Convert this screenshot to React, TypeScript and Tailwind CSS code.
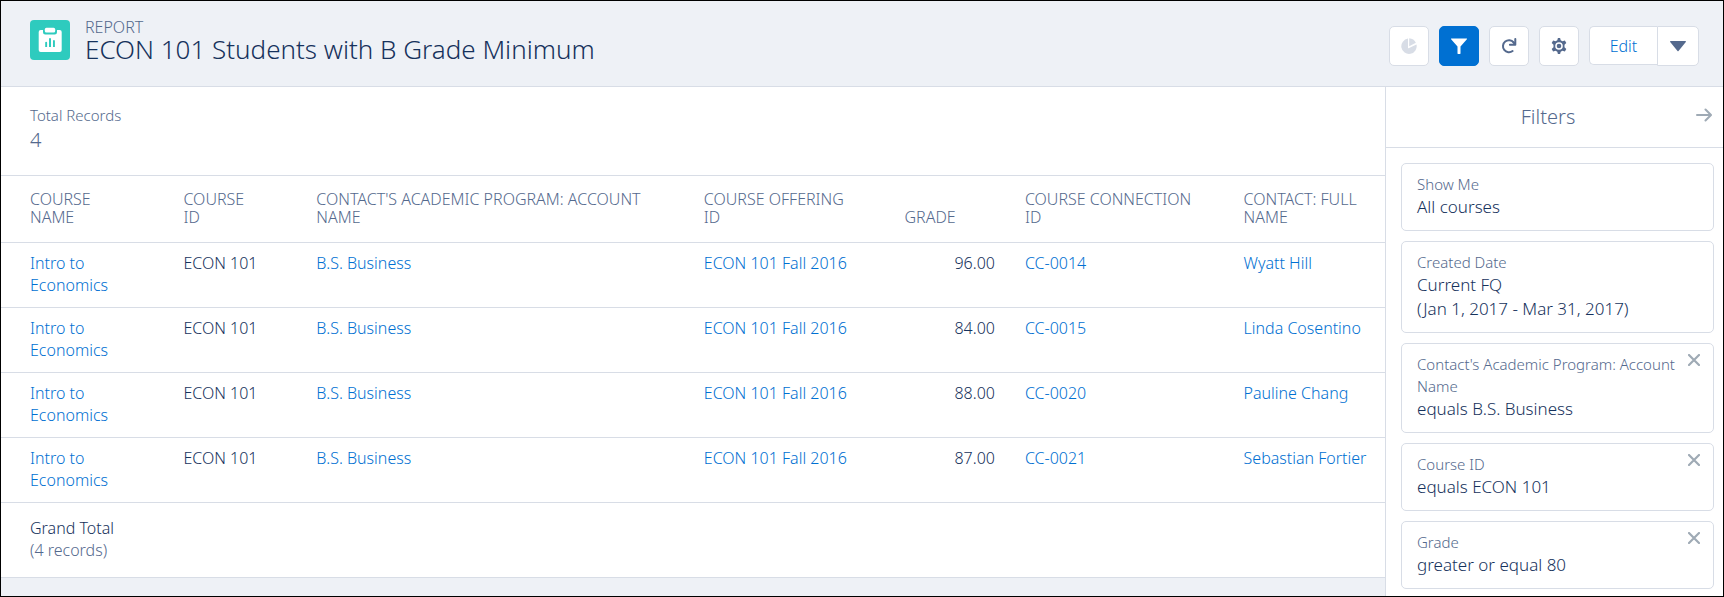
import React from "react";

type Filter = { label: string; values: string[]; removable?: boolean };

const COLUMNS = [
  { title: "Course\nName", width: "w-[12.1%]" },
  { title: "Course\nID", width: "w-[9.6%]" },
  { title: "Contact's Academic Program: Account\nName", width: "w-[28%]" },
  { title: "Course Offering\nID", width: "w-[14.5%]" },
  { title: "Grade", width: "w-[8.7%]" },
  { title: "Course Connection\nID", width: "w-[15.8%]" },
  { title: "Contact: Full\nName", width: "w-[11.3%]" },
];

const ROWS = [
  { grade: "96.00", connection: "CC-0014", contact: "Wyatt Hill" },
  { grade: "84.00", connection: "CC-0015", contact: "Linda Cosentino" },
  { grade: "88.00", connection: "CC-0020", contact: "Pauline Chang" },
  { grade: "87.00", connection: "CC-0021", contact: "Sebastian Fortier" },
];

const FILTERS: Filter[] = [
  { label: "Show Me", values: ["All courses"] },
  { label: "Created Date", values: ["Current FQ", "(Jan 1, 2017 - Mar 31, 2017)"] },
  { label: "Contact's Academic Program: Account Name", values: ["equals B.S. Business"], removable: true },
  { label: "Course ID", values: ["equals ECON 101"], removable: true },
  { label: "Grade", values: ["greater or equal 80"], removable: true },
];

const iconButton = "flex size-10 items-center justify-center rounded-[5px] border";

function ReportIcon() {
  return (
    <svg className="size-10 shrink-0" viewBox="0 0 40 40">
      <rect width="40" height="40" rx="4" fill="#2ecbbe" />
      <rect x="8.7" y="10" width="23" height="22" rx="2" fill="#fff" />
      <path d="M13 8h14v4.3a2.2 2.2 0 0 1-2.2 2.2h-9.6a2.2 2.2 0 0 1-2.2-2.2z" fill="#2ecbbe" />
      <rect x="14.8" y="7.8" width="10.4" height="4.8" rx="1.6" fill="#fff" />
      <path d="M15.2 22.6a.9.9 0 0 1 1.9 0V27h-1.9zM19 19a1 1 0 0 1 2 0v8h-2zM23 20.9a.9.9 0 0 1 1.9 0V27H23z" fill="#2ecbbe" />
    </svg>
  );
}

function PieIcon() {
  return (
    <svg className="size-4" viewBox="0 0 16 16" fill="currentColor">
      <path d="M7 .6a7.7 7.7 0 1 0 8.5 5.9L7.6 10.2a.4.4 0 0 1-.6-.4z" />
      <path d="M8.2.2v8l6.7-3.4A7.8 7.8 0 0 0 8.2.2z" />
    </svg>
  );
}

function FunnelIcon() {
  return (
    <svg className="size-4" viewBox="0 0 16 16" fill="currentColor">
      <path d="M.5.4h15c.5 0 .7.5.4.9L9.500 8.400v7c0 .3-.2.5-.5.5H7c-.3 0-.5-.2-.5-.5v-7L.1 1.300C-.2.900 0 .4.5.4z" />
    </svg>
  );
}

function RefreshIcon() {
  return (
    <svg className="size-4" viewBox="0 0 16 16" fill="none" stroke="currentColor" strokeWidth="2">
      <path d="M12.6 4.4A6 6 0 1 0 11.6 13" strokeLinecap="round" />
      <path d="M14.3 1v5.700H8.9" strokeLinecap="round" strokeLinejoin="round" />
      <path d="m12 4 2 2" />
    </svg>
  );
}

function GearIcon() {
  return (
    <svg className="size-4" viewBox="0 0 16 16" fill="currentColor">
      <path
        fillRule="evenodd"
        d="M6.9 0h2.2l.6 2.3 1.7 1 2.5-.7L15.3 5l-1.800 1.800v2.400l1.800 1.800-1.400 2.400-2.500-.7-1.700 1L9.100 16H6.900l-.6-2.300-1.700-1-2.500.7L.7 11l1.800-1.800V6.800L.7 5l1.400-2.400 2.500.7 1.700-1zM8 4.200a3.800 3.800 0 1 0 0 7.600 3.800 3.800 0 0 0 0-7.600z"
      />
      <circle cx="8" cy="8" r="2.3" />
    </svg>
  );
}

function CaretIcon() {
  return (
    <svg className="size-4" viewBox="0 0 16 16" fill="currentColor">
      <path d="M.6 3h14.800c.5 0 .7.500.4.900l-7.300 9a.7.7 0 0 1-1 0l-7.300-9C-.1 3.500.1 3 .6 3z" />
    </svg>
  );
}

function ArrowIcon() {
  return (
    <svg className="size-4" viewBox="0 0 16 16" fill="none" stroke="currentColor" strokeWidth="2" strokeLinecap="round" strokeLinejoin="round">
      <path d="M1 8h13.500M9.500 2.500 15 8l-5.500 5.500" />
    </svg>
  );
}

function CloseIcon() {
  return (
    <svg className="size-3" viewBox="0 0 12 12" fill="none" stroke="currentColor" strokeWidth="2.2" strokeLinecap="round">
      <path d="m1 1 10 10M11 1 1 11" />
    </svg>
  );
}

function Header() {
  return (
    <header className="flex items-start justify-between border-b border-[#d8dde6] bg-[#eef1f6] pt-[18px] pr-6 pb-5 pl-[29px]">
      <div className="flex gap-[15px]">
        <div className="pt-px">
          <ReportIcon />
        </div>
        <div>
          <p className="leading-4 text-[#54698d] uppercase">Report</p>
          <h1 className="text-[26px] leading-7">ECON 101 Students with B Grade Minimum</h1>
        </div>
      </div>
      <div className="mt-[7px] flex items-start gap-2.5">
        <button disabled aria-label="Show chart" className={`${iconButton} border-[#d8dde6] bg-white text-[#d8dde6]`}>
          <PieIcon />
        </button>
        <button aria-label="Filters" aria-pressed="true" className={`${iconButton} border-[#0070d2] bg-[#0070d2] text-white`}>
          <FunnelIcon />
        </button>
        <button aria-label="Refresh" className={`${iconButton} border-[#d8dde6] bg-white text-[#54698d]`}>
          <RefreshIcon />
        </button>
        <button aria-label="Settings" className={`${iconButton} border-[#d8dde6] bg-white text-[#54698d]`}>
          <GearIcon />
        </button>
        <div className="flex items-start">
          <button className="h-[39px] w-[68px] rounded-l-[5px] border border-r-0 border-[#d8dde6] bg-white text-[#0070d2]">
            Edit
          </button>
          <button aria-label="More actions" className="flex h-10 w-[42px] items-center justify-center rounded-r-[5px] border border-[#d8dde6] bg-white text-[#54698d]">
            <CaretIcon />
          </button>
        </div>
      </div>
    </header>
  );
}

function ReportTable() {
  return (
    <table className="w-full table-fixed border-b border-[#d8dde6] bg-white">
      <thead>
        <tr className="border-b border-[#d8dde6]">
          {COLUMNS.map(({ title, width }) => (
            <th
              key={title}
              scope="col"
              className={`${width} px-[15px] pt-3.5 pb-4 text-left align-bottom leading-[18px] font-light whitespace-pre text-[#54698d] uppercase first:pl-[29px]`}
            >
              {title}
            </th>
          ))}
        </tr>
      </thead>
      <tbody>
        {ROWS.map((row) => (
          <tr key={row.connection} className="border-b border-[#d8dde6] align-top leading-[22px] *:px-[15px] *:pt-[9px] *:pb-[11px]">
            <td>
              <a href="#" className="ml-[14px] block text-[#0070d2]">Intro to Economics</a>
            </td>
            <td>ECON 101</td>
            <td><a href="#" className="text-[#0070d2]">B.S. Business</a></td>
            <td><a href="#" className="text-[#0070d2]">ECON 101 Fall 2016</a></td>
            <td className="text-right">{row.grade}</td>
            <td><a href="#" className="text-[#0070d2]">{row.connection}</a></td>
            <td className="whitespace-nowrap"><a href="#" className="text-[#0070d2]">{row.contact}</a></td>
          </tr>
        ))}
      </tbody>
      <tfoot>
        <tr>
          <td colSpan={7} className="pt-3.5 pb-4 pl-[29px] leading-[22px]">
            <p>Grand Total</p>
            <p className="text-[#54698d]">(4 records)</p>
          </td>
        </tr>
      </tfoot>
    </table>
  );
}

function FilterCard({ label, values, removable }: Filter) {
  return (
    <li className="relative rounded-[5px] border border-[#d8dde6] px-[15px] pt-[9px] pb-[11px]">
      <p className="text-[15px] leading-[22px] text-[#54698d]">{label}</p>
      {values.map((value) => (
        <p key={value} className="text-[17px] leading-6">{value}</p>
      ))}
      {removable && (
        <button aria-label={`Remove ${label} filter`} className="absolute top-2.5 right-[13px] text-[#9faab5]">
          <CloseIcon />
        </button>
      )}
    </li>
  );
}

function FilterPanel() {
  return (
    <aside className="w-[338px] shrink-0 border-l border-[#d8dde6] bg-white">
      <div className="flex h-[61px] items-center border-b border-[#d8dde6] pr-[11px] pl-3.5">
        <h2 className="flex-1 text-center text-[20px] text-[#54698d]">Filters</h2>
        <button aria-label="Close filters" className="pb-1 text-[#9faab5]">
          <ArrowIcon />
        </button>
      </div>
      <ul className="flex flex-col gap-2.5 pt-[15px] pr-[9px] pb-[7px] pl-[15px]">
        {FILTERS.map((filter) => (
          <FilterCard key={filter.label} {...filter} />
        ))}
      </ul>
    </aside>
  );
}

export default function App() {
  return (
    <div className="flex min-h-screen flex-col border border-black bg-[#eef1f6] font-['Noto_Sans',sans-serif] text-base font-light text-[#16325c]">
      <Header />
      <div className="flex flex-1">
        <main className="min-w-0 flex-1">
          <section className="border-b border-[#d8dde6] bg-white pt-4 pb-[22px] pl-[29px] text-[#54698d]">
            <p className="text-[15px] leading-6">Total Records</p>
            <p className="text-[20px] leading-[26px]">4</p>
          </section>
          <ReportTable />
        </main>
        <FilterPanel />
      </div>
    </div>
  );
}
